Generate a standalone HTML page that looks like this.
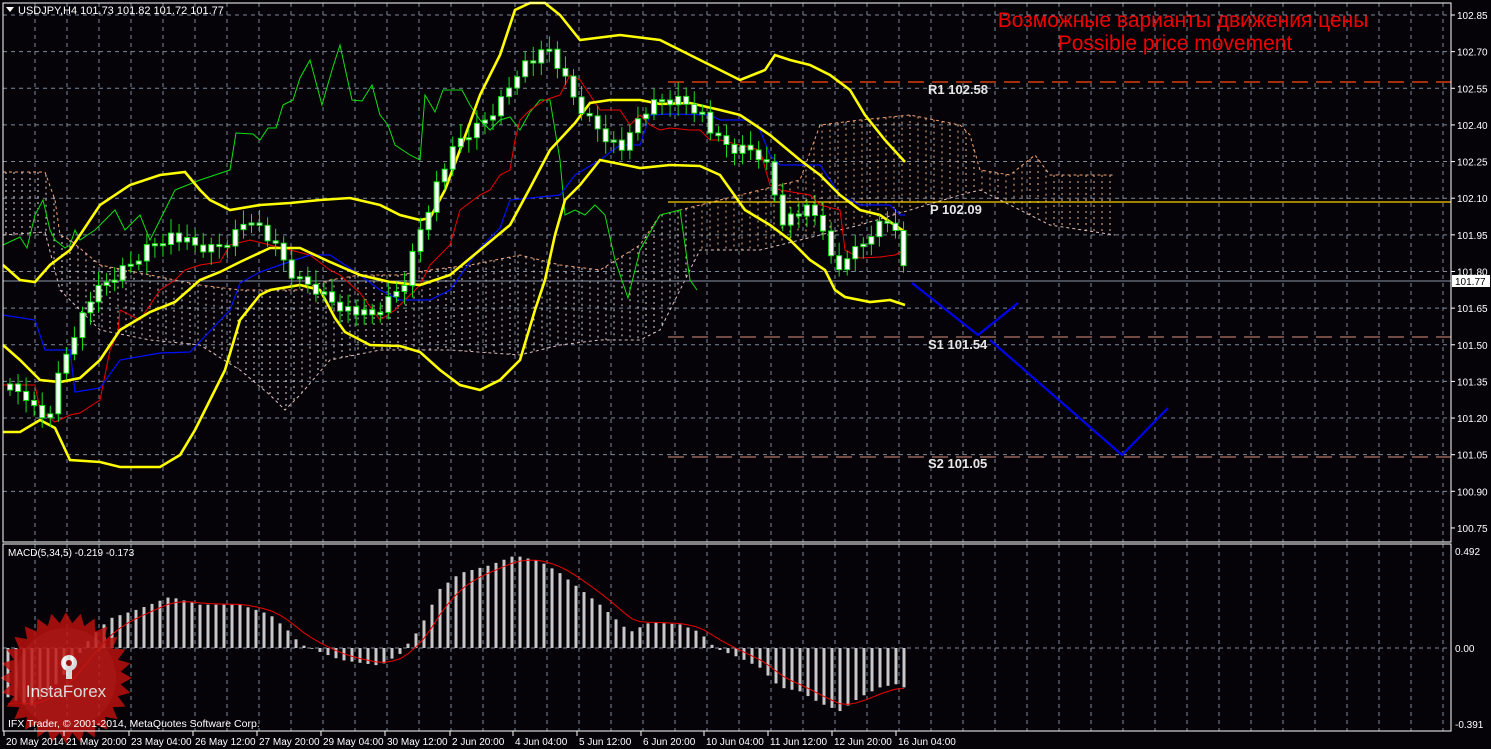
<!DOCTYPE html>
<html><head><meta charset="utf-8"><style>
html,body{margin:0;padding:0;background:#000;width:1491px;height:749px;overflow:hidden}
svg{display:block}
text{font-family:"Liberation Sans",sans-serif}
</style></head><body>
<svg id="s" width="1491" height="749" viewBox="0 0 1491 749" xmlns="http://www.w3.org/2000/svg">
<rect width="1491" height="749" fill="#050307"/>
<g id="grid"></g>
<g id="cloud"></g>
<g id="lines"></g>
<g id="candles"></g>
<g id="macd"></g>
<g id="logo" opacity="0.85">
<polygon id="star" fill="#b8110f"/>
<circle cx="66" cy="678" r="50" fill="#c8201a" opacity="0.6"/>
<g fill="#fff">
<circle cx="69" cy="663" r="8"/><rect x="66" y="663" width="6" height="16"/>
<circle cx="69" cy="663" r="3" fill="#b8110f"/>
</g>
<text x="66" y="697" font-size="17" fill="#fff" text-anchor="middle">InstaForex</text>
</g>
<g id="axes"></g>
<text x="8" y="727" font-size="10.5" fill="#fff">IFX Trader, © 2001-2014, MetaQuotes Software Corp.</text>
<text x="1183" y="27" font-size="21" fill="#f20000" text-anchor="middle">Возможные варианты движения цены</text>
<text x="1175" y="50" font-size="21" fill="#f20000" text-anchor="middle">Possible price movement</text>
<polygon points="6,7 14,7 10,12" fill="#fff"/>
<text x="18" y="14" font-size="11" fill="#fff">USDJPY,H4  101.73 101.82 101.72 101.77</text>
<text x="8" y="556" font-size="10" fill="#fff">MACD(5,34,5) -0.219 -0.173</text>
</svg>
<script>
const NS="http://www.w3.org/2000/svg";
function el(p,t,a,txt){const e=document.createElementNS(NS,t);for(const k in a)e.setAttribute(k,a[k]);if(txt!==undefined)e.textContent=txt;document.getElementById(p).appendChild(e);return e;}
const L=3,R=1451,T=3,MB=542,M2=544,MBot=731;
for(let i=0;i<14;i++){let y=15+i*36.64;el("grid","line",{x1:L,x2:R,y1:y,y2:y,stroke:"#7d8a9c","stroke-dasharray":"4,4","stroke-width":1});}
el("grid","line",{x1:L,x2:R,y1:648,y2:648,stroke:"#7d8a9c","stroke-dasharray":"4,4"});
for(let x=35;x<R;x+=32){el("grid","line",{x1:x,x2:x,y1:T,y2:MB,stroke:"#7d8a9c","stroke-dasharray":"4,4"});el("grid","line",{x1:x,x2:x,y1:M2,y2:MBot,stroke:"#7d8a9c","stroke-dasharray":"4,4"});}
el("axes","rect",{x:L,y:T,width:R-L,height:MB-T,fill:"none",stroke:"#fff"});
el("axes","rect",{x:L,y:M2,width:R-L,height:MBot-M2,fill:"none",stroke:"#fff"});
const pl=["102.85","102.70","102.55","102.40","102.25","102.10","101.95","101.80","101.65","101.50","101.35","101.20","101.05","100.90","100.75"];
pl.forEach((t,i)=>{let y=15+i*36.64;el("axes","line",{x1:R,x2:R+4,y1:y,y2:y,stroke:"#fff"});el("axes","text",{x:1457,y:y+4,"font-size":10,fill:"#fff"},t);});
[["0.492",551],["0.00",648],["-0.391",724]].forEach(a=>el("axes","text",{x:1455,y:a[1]+4,"font-size":10,fill:"#fff"},a[0]));
const dl=[["20 May 2014",6],["21 May 20:00",66],["23 May 04:00",131],["26 May 12:00",195],["27 May 20:00",259],["29 May 04:00",323],["30 May 12:00",387],["2 Jun 20:00",452],["4 Jun 04:00",515],["5 Jun 12:00",579],["6 Jun 20:00",643],["10 Jun 04:00",706],["11 Jun 12:00",770],["12 Jun 20:00",834],["16 Jun 04:00",898]];
dl.forEach(d=>{el("axes","line",{x1:d[1]-2,x2:d[1]-2,y1:MBot,y2:MBot+5,stroke:"#fff"});el("axes","text",{x:d[1],y:745,"font-size":10,fill:"#fff"},d[0]);});
function poly(g,pts,attrs){el(g,"polyline",Object.assign({points:pts.map(p=>p.join(",")).join(" "),fill:"none"},attrs));}
function interp(pts,x){for(let i=0;i<pts.length-1;i++){if(x>=pts[i][0]&&x<=pts[i+1][0]){let t=(x-pts[i][0])/(pts[i+1][0]-pts[i][0]);return pts[i][1]+t*(pts[i+1][1]-pts[i][1]);}}return null;}
const cA=[[3,172],[45,172],[55,200],[60,235],[70,240],[100,265],[150,275],[200,285],[240,290],[300,290],[330,280],[360,275],[400,275],[430,270],[470,265],[520,255],[560,265],[600,270],[640,245],[660,215],[700,205],[760,190],[800,180],[820,125],[860,120],[910,115],[960,125],[970,135],[980,170],[1010,175],[1035,155],[1050,175],[1115,175]];
const cB=[[3,235],[45,232],[60,290],[70,300],[100,330],[150,340],[200,345],[240,370],[270,395],[285,410],[300,395],[330,360],[380,350],[450,350],[520,355],[560,345],[600,340],[640,340],[660,330],[680,290],[700,250],[760,250],[800,240],[860,225],[960,195],[980,190],[1000,200],[1020,210],[1050,225],[1115,235]];
poly("cloud",cA,{stroke:"#f4a070","stroke-dasharray":"3,3"});
poly("cloud",cB,{stroke:"#e0c0c0","stroke-dasharray":"3,3"});
for(let x=6;x<1115;x+=8){let a=interp(cA,x),b=interp(cB,x);if(a==null||b==null)continue;el("cloud","line",{x1:x,x2:x,y1:Math.min(a,b),y2:Math.max(a,b),stroke:x<700?"#e8d8d8":"#f0b080","stroke-dasharray":"2,4","stroke-width":1});}
el("lines","line",{x1:668,x2:R,y1:82,y2:82,stroke:"#ff4a10","stroke-dasharray":"16,8","stroke-width":1.3});
el("lines","line",{x1:668,x2:R,y1:202,y2:202,stroke:"#ffd000","stroke-width":1.3});
el("lines","line",{x1:668,x2:R,y1:337,y2:337,stroke:"#e09080","stroke-dasharray":"16,8"});
el("lines","line",{x1:668,x2:R,y1:457,y2:457,stroke:"#e09080","stroke-dasharray":"16,8"});
el("lines","line",{x1:L,x2:R,y1:281,y2:281,stroke:"#8a96a8"});
[["R1 102.58",928,94],["P 102.09",930,214],["S1 101.54",928,349],["S2 101.05",928,468]].forEach(a=>el("lines","text",{x:a[1],y:a[2],"font-size":13,"font-weight":"bold",fill:"#e8e8e8","font-family":"Liberation Mono,monospace"},a[0]));
el("lines","rect",{x:1452,y:275,width:38,height:12,fill:"#fff"});
el("lines","text",{x:1455,y:285,"font-size":10,fill:"#000"},"101.77");
const green=[[3,245],[20,237],[27,248],[35,215],[43,200],[50,230],[55,240],[65,248],[70,245],[75,230],[80,240],[95,230],[115,210],[125,230],[140,215],[150,240],[160,220],[175,190],[200,180],[215,175],[230,170],[236,133],[253,134],[260,140],[268,128],[276,128],[283,105],[293,100],[300,78],[310,60],[322,105],[332,70],[340,45],[352,100],[362,101],[372,85],[380,115],[388,125],[395,145],[410,155],[420,160],[425,95],[435,112],[443,90],[462,90],[470,105],[480,120],[490,130],[500,120],[510,117],[520,130],[530,112],[540,100],[550,100],[560,160],[565,215],[575,210],[585,215],[595,205],[605,215],[615,260],[628,298],[640,250],[660,215],[680,210],[690,280],[697,290]];
poly("lines",green,{stroke:"#10e010","stroke-width":1});
const red=[[3,385],[35,385],[40,410],[55,422],[70,415],[80,413],[100,400],[110,350],[118,333],[120,310],[140,320],[160,290],[175,280],[185,270],[200,265],[220,262],[230,245],[250,240],[270,245],[290,250],[310,255],[330,270],[340,275],[360,293],[380,320],[395,310],[405,300],[420,285],[430,265],[450,245],[460,210],[480,195],[490,190],[500,175],[510,170],[515,140],[520,120],[530,110],[545,100],[560,95],[570,75],[580,80],[600,110],[620,110],[630,125],[640,115],[650,125],[660,130],[670,128],[690,130],[700,130],[710,140],[720,140],[760,150],[770,185],[780,190],[810,195],[820,205],[840,210],[845,250],[860,258],[880,257],[895,255],[905,250]];
poly("lines",red,{stroke:"#f00000","stroke-width":1});
const blue=[[3,315],[35,320],[45,350],[70,350],[75,392],[100,388],[120,360],[160,353],[190,352],[230,310],[240,283],[260,272],[280,265],[310,255],[330,255],[360,275],[380,290],[400,300],[430,300],[450,290],[480,248],[500,228],[510,200],[560,195],[575,175],[600,160],[620,145],[640,145],[650,115],[670,114],[710,115],[720,120],[750,120],[760,130],[770,155],[780,165],[820,165],[840,195],[860,205],[880,205],[890,205],[900,215],[905,215]];
poly("lines",blue,{stroke:"#0010ff","stroke-width":1.2});
const up=[[3,265],[20,280],[35,282],[50,265],[70,250],[100,205],[130,185],[160,175],[185,172],[200,190],[210,200],[230,210],[260,205],[290,203],[320,200],[350,198],[380,205],[400,215],[420,220],[430,218],[445,190],[460,150],[480,95],[500,55],[515,10],[530,3],[545,3],[560,15],[580,40],[620,35],[660,40],[700,60],[740,80],[765,70],[775,55],[790,60],[810,65],[830,75],[850,90],[865,115],[885,140],[905,162]];
const mid=[[3,345],[20,360],[40,380],[60,382],[80,378],[100,360],[120,330],[150,312],[175,302],[200,280],[220,272],[240,262],[270,248],[300,248],[330,262],[360,275],[390,282],[420,285],[450,275],[480,250],[510,225],[530,188],[550,150],[575,123],[590,103],[610,100],[640,100],[660,104],[690,103],[720,110],[740,115],[770,135],[800,160],[820,175],[840,195],[860,210],[880,215],[905,232]];
const lo=[[3,432],[20,432],[40,420],[55,428],[70,460],[100,462],[120,467],[160,467],[180,455],[195,430],[205,410],[215,390],[225,370],[240,320],[260,295],[270,290],[300,285],[320,290],[335,318],[345,332],[370,345],[400,346],[420,352],[440,370],[460,385],[480,390],[500,380],[520,360],[535,310],[545,280],[555,235],[565,200],[580,185],[600,160],[640,168],[670,165],[700,166],[720,175],[745,210],[770,225],[790,240],[810,260],[825,270],[835,290],[845,297],[870,302],[890,300],[905,305]];
[up,mid,lo].forEach(p=>poly("lines",p,{stroke:"#ffff00","stroke-width":2.6}));
poly("lines",[[912,283],[978,335],[1018,303]],{stroke:"#0000f0","stroke-width":2.2});
poly("lines",[[990,340],[1122,455],[1168,408]],{stroke:"#0000f0","stroke-width":2.2});
const key=[[10,390],[25,395],[40,420],[50,410],[60,370],[75,330],[90,300],[110,280],[130,265],[150,245],[170,235],[190,245],[210,250],[230,240],[250,215],[265,235],[280,255],[295,280],[310,285],[330,300],[350,310],[370,318],[390,300],[405,280],[420,230],[440,175],[460,140],[475,130],[490,115],[505,95],[520,65],[535,60],[550,50],[565,80],[575,100],[590,120],[610,140],[625,150],[640,115],[660,100],[680,100],[700,110],[715,140],[735,150],[755,150],[770,170],[780,220],[795,215],[810,210],[825,230],[835,280],[845,255],[860,248],[875,225],[890,220],[900,250],[908,288]];
let prev=interp(key,10);
for(let i=0;i<112;i++){let x=10+i*8.05;let c=interp(key,Math.min(x,908));if(c==null)c=prev;let n=((i*37)%11-5)*1.2;c+=n;let o=prev;let top=Math.min(o,c),bot=Math.max(o,c);if(bot-top<2){bot=top+2;}
el("candles","line",{x1:x,x2:x,y1:top-6-(i*13%9),y2:bot+6+(i*7%8),stroke:"#18e018"});
el("candles","rect",{x:x-2.5,y:top,width:5,height:bot-top,fill:"#fff",stroke:"#18e018","stroke-width":1});prev=c;}
const mk=[[8,-0.25],[30,-0.3],[50,-0.22],[70,-0.1],[90,0.05],[110,0.15],[140,0.2],[170,0.26],[200,0.22],[240,0.22],[270,0.17],[290,0.08],[300,0.02],[320,-0.02],[340,-0.06],[380,-0.09],[400,-0.03],[420,0.1],[440,0.3],[460,0.38],[490,0.42],[515,0.47],[540,0.44],[560,0.38],[580,0.3],[600,0.22],[615,0.15],[630,0.08],[650,0.13],[680,0.12],[700,0.08],[715,0.0],[740,-0.05],[760,-0.1],[780,-0.2],[800,-0.22],[820,-0.28],[840,-0.32],[860,-0.25],[880,-0.2],[900,-0.18],[908,-0.22]];
for(let x=8;x<=908;x+=8){let v=interp(mk,x);let y=648-v*197;el("macd","line",{x1:x,x2:x,y1:648,y2:y,stroke:"#c8c8c8","stroke-width":3});}
let s=-0.3;const sp=[];for(let x=8;x<=908;x+=8){s=s+(interp(mk,x)-s)*0.33;sp.push([x,648-s*197]);}
poly("macd",sp,{stroke:"#f00000","stroke-width":1});
let pts=[];const cx=66,cy=678;for(let i=0;i<56;i++){let r=i%2?55:66;let a=i*Math.PI/28;pts.push((cx+r*Math.cos(a)).toFixed(1)+","+(cy+r*Math.sin(a)).toFixed(1));}
document.getElementById("star").setAttribute("points",pts.join(" "));
</script>
</body></html>
